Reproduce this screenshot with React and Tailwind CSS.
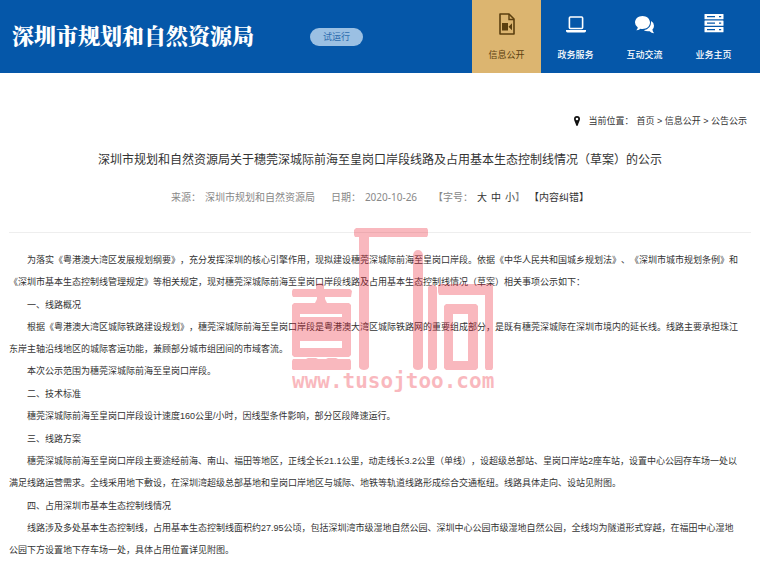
import React from "react";

const navItems = [
  { label: "信息公开", icon: FileIcon, active: true },
  { label: "政务服务", icon: LaptopIcon },
  { label: "互动交流", icon: CommentsIcon },
  { label: "业务主页", icon: ServerIcon },
];

const crumbs = ["首页", "信息公开", "公告公示"];

const sections = [
  [
    "为落实《粤港澳大湾区发展规划纲要》，充分发挥深圳的核心引擎作用，现拟建设穗莞深城际前海至皇岗口岸段。依据《中华人民共和国城乡规划法》、《深圳市城市规划条例》和《深圳市基本生态控制线管理规定》等相关规定，现对穗莞深城际前海至皇岗口岸段线路及占用基本生态控制线情况（草案）相关事项公示如下：",
  ],
  [
    "一、线路概况",
    "根据《粤港澳大湾区城际铁路建设规划》，穗莞深城际前海至皇岗口岸段是粤港澳大湾区城际铁路网的重要组成部分，是既有穗莞深城际在深圳市境内的延长线。线路主要承担珠江东岸主轴沿线地区的城际客运功能，兼顾部分城市组团间的市域客流。",
    "本次公示范围为穗莞深城际前海至皇岗口岸段。",
  ],
  [
    "二、技术标准",
    "穗莞深城际前海至皇岗口岸段设计速度160公里/小时，因线型条件影响，部分区段降速运行。",
  ],
  [
    "三、线路方案",
    "穗莞深城际前海至皇岗口岸段主要途经前海、南山、福田等地区，正线全长21.1公里，动走线长3.2公里（单线），设超级总部站、皇岗口岸站2座车站，设置中心公园存车场一处以满足线路运营需求。全线采用地下敷设，在深圳湾超级总部基地和皇岗口岸地区与城际、地铁等轨道线路形成综合交通枢纽。线路具体走向、设站见附图。",
  ],
  [
    "四、占用深圳市基本生态控制线情况",
    "线路涉及多处基本生态控制线，占用基本生态控制线面积约27.95公顷，包括深圳湾市级湿地自然公园、深圳中心公园市级湿地自然公园，全线均为隧道形式穿越，在福田中心湿地公园下方设置地下存车场一处，具体占用位置详见附图。",
  ],
];

function FileIcon() {
  return (
    <svg width="16" height="22" viewBox="0 0 16 22" fill="none" aria-hidden="true">
      <path d="M1 1h9l5 5v15H1z" stroke="currentColor" strokeWidth="1.6" strokeLinejoin="round" />
      <path d="M10 1v5.500h5" stroke="currentColor" strokeWidth="1.4" />
      <path d="M3 10h6v7.500H3zM9.500 13.700l3.500-3.500v7z" fill="currentColor" />
    </svg>
  );
}

function LaptopIcon() {
  return (
    <svg width="20" height="22" viewBox="0 0 20 22" fill="none" aria-hidden="true">
      <rect x="3.400" y="4" width="13.200" height="11.500" rx="1" stroke="currentColor" strokeWidth="1.600" />
      <path d="M0 17h20v1q0 1.400-1.500 1.400h-17Q0 19.400 0 18z" fill="currentColor" />
    </svg>
  );
}

function CommentsIcon() {
  return (
    <svg width="20" height="22" viewBox="0 0 20 22" fill="currentColor" aria-hidden="true">
      <path d="M7.500 3C11.700 3 15 5.800 15 9.500S11.700 16 7.500 16q-1 0-2-.2Q3.500 17.300 1.200 17.300 2.600 16 2.800 14.500 0 12.700 0 9.500C0 5.800 3.300 3 7.500 3z" />
      <path d="M16.200 8Q19 9.700 19 12.700q0 2.300-1.600 3.800.3 2 1.700 3.800-2.600-.2-4.500-2.100-3.200.6-5.800-1 7.200-.8 7.400-9.200z" />
    </svg>
  );
}

function ServerIcon() {
  return (
    <svg width="20" height="22" viewBox="0 0 20 22" aria-hidden="true">
      {[1, 7.5, 14].map((y) => (
        <g key={y}>
          <rect x="0.500" y={y} width="19" height="5.200" rx="0.500" fill="currentColor" />
          <path d={`M3 ${y + 2.6}h8M15 ${y + 2.6}h2.200`} stroke="#0557a9" strokeWidth="1.400" />
        </g>
      ))}
    </svg>
  );
}

function PinIcon() {
  return (
    <svg width="6" height="10" viewBox="0 0 6 10" fill="#111" aria-hidden="true">
      <path
        fillRule="evenodd"
        d="M3 0a3 3 0 0 1 3 3c0 1.500-1.500 3.500-2.200 6.500q-.8.800-1.600 0C1.500 6.500 0 4.500 0 3a3 3 0 0 1 3-3zm0 1.700a1.300 1.300 0 1 0 0 2.600 1.300 1.300 0 0 0 0-2.600z"
      />
    </svg>
  );
}

function Watermark() {
  return (
    <div className="pointer-events-none absolute -top-[6px] left-1/2 -ml-[88px] text-[#ed1c30] opacity-[0.31]">
      <svg width="202" height="144" viewBox="292 226 202 144" fill="currentColor" aria-hidden="true">
        {/* left glyph */}
        <path
          fillRule="evenodd"
          d="M293 288h23v-4q4-4 8 0v4h26l2 2-1 6h-26v2l2 4h22l2 2v50l-2 2h-55l-2-2v-50l2-2h21l2-4v-2h-24l-1-2v-4zM300 313v3h42v-3zM300 340v7h42v-7z"
        />
        <path d="M293 358h13l2-1h8l2 1h8l2-1h8l2 1h12l1 2v8l-1 1h-57l-1-1v-8z" />
        {/* middle glyph */}
        <path d="M356 227h71l1 2v5l-1 2h-58v130q-1 3-5 3t-5-3V236h-4l-1-2v-5z" />
        <path d="M413 366V254q1-5 5-5t5 5v112q-1 3-5 3t-5-3z" />
        {/* right glyph */}
        <path d="M428 367v-81q4-5 9 0v81l-2 2h-5zM439 283h53l1 2v82l-1 2h-6l-1-2v-73h-46l-1-3v-6z" />
        <path d="M446 303h30l2 2v62l-2 2h-30l-2-2v-62zM453 313v47h15v-47z" fillRule="evenodd" />
      </svg>
      <span className="block font-['DejaVu_Sans_Mono',monospace] text-[21px] leading-[20px] font-bold">
        www.tusojtoo.com
      </span>
    </div>
  );
}

export default function App() {
  return (
    <div className="min-h-screen bg-white font-['Liberation_Sans','Noto_Sans_CJK_SC',sans-serif] text-[9px] text-[#333] [text-spacing-trim:space-all]">
      <header className="flex h-[73px] items-stretch bg-[#0557a9] text-white">
        <h1 className="flex items-center pb-1 pl-3 font-['Noto_Serif_CJK_SC','Noto_Sans_CJK_SC',serif] text-[22px] font-black">
          深圳市规划和自然资源局
        </h1>
        <div className="ml-14 flex items-center">
          <span className="rounded-full bg-[#9bc0e3] px-[13px] leading-[18px] text-[#2b6cae]">试运行</span>
        </div>
        <nav className="mr-3 ml-auto flex">
          {navItems.map(({ label, icon: Icon, active }) => (
            <a
              key={label}
              href="#"
              className={`flex w-[69px] flex-col items-center gap-3 pt-[13px] leading-[16px] ${
                active ? "bg-[#dcb570] text-[#5b3f0f]" : "font-medium text-white"
              }`}
            >
              <Icon />
              {label}
            </a>
          ))}
        </nav>
      </header>

      <main className="px-[9px] pt-10">
        <div className="flex items-center justify-end pr-1 leading-[16px]">
          <PinIcon />
          <span className="mr-[3px] ml-2">当前位置：</span>
          {crumbs.map((crumb, i) => (
            <span key={crumb} className="whitespace-pre">
              {i > 0 && " > "}
              <a href="#">{crumb}</a>
            </span>
          ))}
        </div>

        <h2 className="mt-5 text-center text-[12px] leading-[22px]">
          深圳市规划和自然资源局关于穗莞深城际前海至皇岗口岸段线路及占用基本生态控制线情况（草案）的公示
        </h2>

        <div className="mt-[18px] flex justify-center gap-4 border-b border-[#eee] pb-[27px] font-['Noto_Sans','Noto_Sans_CJK_SC',sans-serif] text-[10px] leading-[16px] text-[#888]">
          <span className="flex gap-1">
            <span>来源：</span>
            <span>深圳市规划和自然资源局</span>
          </span>
          <span className="flex gap-1">
            <span>日期：</span>
            <time dateTime="2020-10-26">2020-10-26</time>
          </span>
          <div className="flex gap-1">
            <span>【字号：</span>
            <button type="button" className="text-[#333]">大</button>
            <button type="button" className="text-[#333]">中</button>
            <span>
              <button type="button" className="text-[#333]">小</button>】
            </span>
            <button type="button" className="text-[#333]">【内容纠错】</button>
          </div>
        </div>

        <article className="relative flex flex-col gap-px pt-4 pr-[11px] leading-[22px]">
          {sections.map((paragraphs, i) => (
            <section key={i}>
              {paragraphs.map((text) => (
                <p key={text} className="indent-[18px]">
                  {text}
                </p>
              ))}
            </section>
          ))}
          <Watermark />
        </article>
      </main>
    </div>
  );
}
